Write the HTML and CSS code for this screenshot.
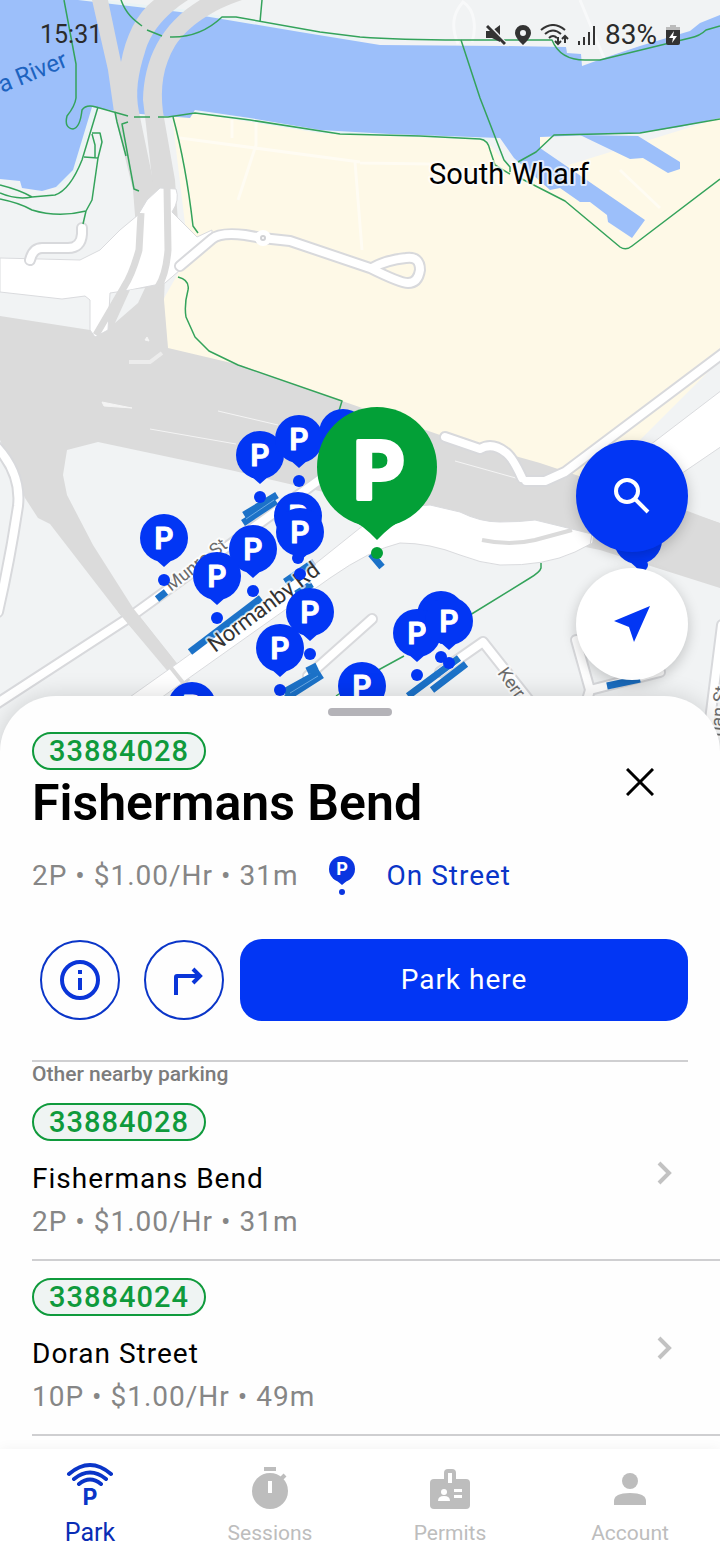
FILE: index.html
```html
<!DOCTYPE html>
<html lang="en">
<head>
    <meta charset="UTF-8">
    <meta name="viewport" content="width=device-width, initial-scale=1.0">
    <title>Park</title>
    <link rel="stylesheet" href="styles.css">
</head>
<body>
    <section class="map">
        <svg class="map-canvas" viewBox="0 0 720 760" preserveAspectRatio="xMidYMin slice">
            <defs>
                <g id="pin">
                    <circle r="24"/>
                    <path d="M-9 21L0 29L9 21Z"/>
                    <circle cy="42" r="6"/>
                </g>
            </defs>

            <!-- parkland -->
            <path class="park" d="M172 116L195 110L250 118L320 131L390 135L485 139L520 180L720 118V360L600 480L540 470L345 410L168 352L163 300L180 270L186 232Z"/>

            <!-- river and docks -->
            <path class="shore" d="M94 107L73 170L56 187M195 110L320 130L390 133L490 137M78 0L180 12L360 42"/>
            <path class="water" d="M0 0H78L180 12L300 32L380 45L500 46L566 47L567 53L581 54L582 66L607 57L640 46L690 31L700 23L720 15V118L680 127L640 133L540 137V148L645 220L632 238L608 222L607 215L590 202L580 202L560 188L550 190L514 158L500 138L390 134L320 130L250 118L195 110L190 118L128 113L92 107L73 170L56 187L42 191L22 188L20 181L0 179Z"/>
            <path class="park" d="M540 137H554L540 148Z"/>
            <path class="water" d="M580 135L638 136L680 162V169L668 173L643 158L630 159Z"/>
            <path class="faint" d="M458 44C448 20 458 8 463 2C476 10 476 30 472 42M580 0L604 58M232 120V138M256 122V145L238 200M180 138L360 162M355 162L362 250M360 163L430 164M620 170L660 208"/>

            <!-- motorway -->
            <path class="motorway" d="M92 0H108L121 62C126 36 136 14 154 0H188C163 16 150 34 145 52C138 74 135 92 139 112L155 190L158 240H137L133 190L114 112L108 70Z"/>
            <path class="motorway" d="M200 0H242C212 10 188 26 175 46C163 66 160 88 163 112L175 180L180 250H160L146 125L143 100C144 60 160 24 200 0Z"/>
            <path class="motorway" d="M0 316L90 330L125 290L165 275L164 300L168 348L240 365L345 402L440 435L540 463L720 523V588L600 550L345 497L230 470L98 442L67 450L63 475L67 495L93 545L133 608L190 680L182 686L118 612L50 524L38 518L25 498L0 440Z"/>
            <path class="motorway-line" d="M102 402L132 408L104 406ZM150 429L236 444M218 411L278 425M455 461L530 482M145 340L149 341L147 337Z"/>
            <path class="ramp" d="M129 362H150L162 353"/>

            <!-- interchange -->
            <path class="street-area" d="M0 258L80 260L100 250L120 230L138 215L147 200L160 188L176 189Q180 200 172 212L197 237L212 230V245L180 270L165 283L130 290L110 293L108 330L95 337L90 330V300L85 296L62 299L0 292Z"/>
            <path class="ground" d="M130 290L145 288L138 303L115 323Z"/>
            <path class="underpass" d="M141 213L139 250Q132 275 124 287L96 335M167 187L168 250Q166 275 158 287"/>

            <!-- streets: casing first, then fill -->
            <g class="street casing">
                <path d="M30 260Q33 248 42 248H68Q81 248 82 234V228"/>
                <path d="M180 266L212 239Q220 232 245 235L262 238L290 241L370 268Q400 283 408 283Q418 283 420 270Q420 256 406 258Q386 260 372 268"/>
                <path d="M-10 440Q22 470 18 506Q10 560 -2 612"/>
                <path d="M-10 708L130 617L322 478"/>
                <path d="M445 437L480 449Q492 442 505 452Q512 456 522 478M526 481H545L565 472L730 348"/>
                <path d="M372 619L308 676"/>
                <path d="M440 672L483 642L532 704"/>
                <path d="M576 640L590 690L660 672M590 690L584 710"/>
                <path d="M722 625L710 720"/>
            </g>
            <g class="street">
                <path d="M30 260Q33 248 42 248H68Q81 248 82 234V228"/>
                <path d="M180 266L212 239Q220 232 245 235L262 238L290 241L370 268Q400 283 408 283Q418 283 420 270Q420 256 406 258Q386 260 372 268"/>
                <path d="M-10 440Q22 470 18 506Q10 560 -2 612"/>
                <path d="M-10 708L130 617L322 478"/>
                <path d="M445 437L480 449Q492 442 505 452Q512 456 522 478M526 481H545L565 472L730 348"/>
                <path d="M372 619L308 676"/>
                <path d="M440 672L483 642L532 704"/>
                <path d="M576 640L590 690L660 672M590 690L584 710"/>
                <path d="M722 625L710 720"/>
            </g>
            <circle class="roundabout" cx="263" cy="238" r="8"/>
            <circle class="island" cx="263" cy="238" r="2"/>
            <path class="motorway" d="M118 612L133 608L190 680L180 686Z"/>

            <!-- Normanby Rd and the wide road on the right -->
            <path class="street-area" d="M120 704L175 665L310 568L360 528L390 508L430 505L460 512Q480 522 500 522Q520 522 535 520L580 531L604 537L575 552Q545 566 500 565Q480 563 460 555Q430 543 400 543Q370 550 330 578L158 700Z"/>
            <path class="underpass-thin" d="M482 540Q510 546 535 540L572 530"/>
            <path class="street-area" d="M722 390L650 445L600 490L590 545L650 495L722 446Z"/>
            <path class="motorway" d="M600 478L722 524V588L592 545Z"/>
            <path class="underpass-thin" d="M168 664L184 684"/>

            <!-- walking and bike paths -->
            <path class="path" d="M64 0L76 64L76 98Q75 106 67 116Q64 128 73 129Q80 128 82 110Q86 104 96 107L128 116M134 117H150M158 117H168L195 113L250 120L340 134L420 136L480 139Q488 140 490 150L495 165L510 174"/>
            <path class="path" d="M121 0C126 14 134 20 142 26M147 30L162 36M170 37Q200 38 222 17L236 17L320 32L360 37Q400 40 460 40H552Q560 60 585 60H600L690 38Q700 36 706 30L720 26M262 0L260 22"/>
            <path class="path" d="M461 40L480 98L504 160L510 167V172M518 162L536 152L554 135L640 133L720 119M520 178L565 201L620 247Q626 251 632 246L720 179"/>
            <path class="path" d="M98 107L82 160Q70 190 55 195L32 197Q20 190 0 185M0 193Q16 200 32 197M0 199Q20 203 32 210Q58 218 86 211L92 200L98 158L84 157M92 133H100L102 142L98 158M95 158V145L92 134M86 211L83 224M115 112L117 122L126 156M128 122L122 124L134 189L139 191M173 117Q186 165 193 226L198 233"/>
            <path class="path" d="M178 277Q190 280 188 290Q184 305 186 317L195 337L209 351L238 365L342 401L338 414M541 563V568Q540 572 530 578L470 615M404 656L360 680L336 696"/>

            <!-- parking bays -->
            <g class="bay">
                <path d="M157 599L166 592"/>
                <path d="M244 515L277 495M243 523L276 501"/>
                <path d="M190 652L261 598"/>
                <path d="M285 582L314 562M296 594L312 584"/>
                <path d="M284 692L320 672M286 698L322 675M307 671L317 666"/>
                <path d="M408 696L459 658M432 690L466 664"/>
                <path d="M371 554L382 567"/>
                <path d="M607 686L640 679"/>
            </g>
            <path class="bay-gap" d="M246 519L274 500M290 693L318 676"/>

            <!-- labels -->
            <text class="label river" transform="translate(2 93) rotate(-22)">a River</text>
            <text class="label place" x="509" y="184">South Wharf</text>
            <text class="label road" transform="translate(171 592) rotate(-38)">Munro St</text>
            <text class="label main-road" transform="translate(215 653) rotate(-37)">Normanby Rd</text>
            <text class="label road" transform="translate(497 673) rotate(54)">Kerr</text>
            <text class="label road" transform="translate(722 737) rotate(-84)">uan St</text>

            <!-- pins -->
            <g class="pin" transform="translate(343 433)"><use href="#pin"/></g>
            <g class="pin" transform="translate(260 455)"><use href="#pin"/><text y="11">P</text></g>
            <g class="pin" transform="translate(299 439)"><use href="#pin"/><text y="11">P</text></g>
            <g class="pin" transform="translate(164 538)"><use href="#pin"/><text y="11">P</text></g>
            <g class="pin" transform="translate(253 549)"><use href="#pin"/><text y="11">P</text></g>
            <g class="pin" transform="translate(217 576)"><use href="#pin"/><text y="11">P</text></g>
            <g class="pin" transform="translate(298 516)"><use href="#pin"/><text y="11">P</text></g>
            <g class="pin" transform="translate(300 532)"><use href="#pin"/><text y="11">P</text></g>
            <g class="pin" transform="translate(310 612)"><use href="#pin"/><text y="11">P</text></g>
            <g class="pin" transform="translate(280 648)"><use href="#pin"/><text y="11">P</text></g>
            <g class="pin" transform="translate(192 706)"><use href="#pin"/><text y="11">P</text></g>
            <g class="pin" transform="translate(362 686)"><use href="#pin"/><text y="11">P</text></g>
            <g class="pin" transform="translate(441 615)"><use href="#pin"/></g>
            <g class="pin" transform="translate(417 633)"><use href="#pin"/><text y="11">P</text></g>
            <g class="pin" transform="translate(449 621)"><use href="#pin"/><text y="11">P</text></g>
            <g class="pin" transform="translate(638 540)"><use href="#pin"/></g>
            <g class="pin" transform="translate(642 523)"><use href="#pin"/></g>

            <g class="pin selected" transform="translate(377 467)">
                <circle r="60"/>
                <path d="M-30 50Q-14 58 0 73Q14 58 30 50Z"/>
                <circle cy="86" r="6"/>
                <text x="2" y="32">P</text>
            </g>
        </svg>

        <header class="status-bar">
            <span>15:31</span>
            <div class="status-icons">
                <svg width="20" height="22" viewBox="0 0 20 22"><path d="M0 7H6L14 1V18L6 14H0Z" fill="#333"/><path d="M3 1L20 19" stroke="#f1f3f4" stroke-width="2"/><path d="M1 2L19 20" stroke="#333" stroke-width="3"/></svg>
                <svg width="16" height="20" viewBox="0 0 16 20"><path fill="#333" fill-rule="evenodd" d="M8 0A8 8 0 0 0 0 8C0 13 8 20 8 20S16 13 16 8A8 8 0 0 0 8 0ZM8 5A3 3 0 1 1 8 11A3 3 0 0 1 8 5Z"/></svg>
                <svg width="29" height="22" viewBox="0 0 29 22" fill="none" stroke="#333" stroke-width="2"><path d="M1 6Q13 -4 25 6M5 10Q13 3 21 10M9 14Q13 10 17 14"/><path d="M18 13V20M15 17L18 20L21 17M25 19V12M22 15L25 12L28 15"/></svg>
                <svg width="18" height="20" viewBox="0 0 18 20" stroke="#333" stroke-width="2"><path d="M1 16V20M6 12V20M11 7V20M16 1V20"/></svg>
                <span class="battery">83%</span>
                <svg width="14" height="20" viewBox="0 0 14 20"><path d="M4 0H10V2H14V5H0V2H4Z" fill="#bbb"/><path d="M0 5H14V18Q14 20 12 20H2Q0 20 0 18Z" fill="#333"/><path d="M8 6L3 13H7L6 18L11 11H7Z" fill="#fff"/></svg>
            </div>
        </header>

        <div class="map-buttons">
            <button class="round-button search" aria-label="Search">
                <svg width="36" height="36" viewBox="0 0 36 36" fill="none" stroke="#fff" stroke-width="4"><circle cx="13" cy="13" r="11"/><path d="M21 21L34 34"/></svg>
            </button>
            <button class="round-button locate" aria-label="My location">
                <svg width="36" height="36" viewBox="0 0 36 36"><path d="M36 0L20 36L15 21L0 15Z" fill="#0236f4"/></svg>
            </button>
        </div>
    </section>

    <main class="sheet">
        <div class="handle"></div>

        <div class="sheet-header">
            <div>
                <span class="zone">33884028</span>
                <h1>Fishermans Bend</h1>
            </div>
            <button class="close" aria-label="Close">
                <svg width="28" height="28" viewBox="0 0 28 28" stroke="#000" stroke-width="3"><path d="M1 1L27 27M27 1L1 27"/></svg>
            </button>
        </div>

        <div class="info">
            <span class="meta">2P • $1.00/Hr • 31m</span>
            <svg class="small-pin" width="26" height="40" viewBox="-13 -13 26 40"><circle r="13"/><path d="M-6 11L0 16L6 11Z"/><circle cy="23" r="3"/><text y="6">P</text></svg>
            <span class="on-street">On Street</span>
        </div>

        <div class="actions">
            <button class="outline-button" aria-label="Information">
                <svg width="40" height="40" viewBox="0 0 40 40" fill="none" stroke="#0a35d8" stroke-width="4"><circle cx="20" cy="20" r="18"/><path d="M20 18V30M20 10V14"/></svg>
            </button>
            <button class="outline-button" aria-label="Directions">
                <svg width="40" height="40" viewBox="0 0 40 40" fill="none" stroke="#0a35d8" stroke-width="4"><path d="M12 35V17Q12 16 13 16H36M29 9L36 16L29 23"/></svg>
            </button>
            <button class="park-button">Park here</button>
        </div>

        <h2>Other nearby parking</h2>
        <ul class="nearby">
            <li>
                <a href="#">
                    <div>
                        <span class="zone">33884028</span>
                        <p class="name">Fishermans Bend</p>
                        <p class="meta">2P • $1.00/Hr • 31m</p>
                    </div>
                    <svg class="chevron" width="15" height="24" viewBox="0 0 15 24"><path d="M2 2L12 12L2 22"/></svg>
                </a>
            </li>
            <li>
                <a href="#">
                    <div>
                        <span class="zone">33884024</span>
                        <p class="name">Doran Street</p>
                        <p class="meta">10P • $1.00/Hr • 49m</p>
                    </div>
                    <svg class="chevron" width="15" height="24" viewBox="0 0 15 24"><path d="M2 2L12 12L2 22"/></svg>
                </a>
            </li>
        </ul>
    </main>

    <nav class="tabs">
        <a href="#" class="active">
            <svg width="48" height="48" viewBox="0 0 48 48"><path d="M3 13Q24 -5 45 13M8 18Q24 5 40 18M13 23Q24 14 35 23" fill="none" stroke="#0a35c8" stroke-width="4" stroke-linecap="round"/><text x="24" y="44">P</text></svg>
            Park
        </a>
        <a href="#">
            <svg width="48" height="48" viewBox="0 0 48 48" fill="#bdbdbd"><path d="M18 6H30V10H18Z"/><path d="M35 18L39 14" stroke="#bdbdbd" stroke-width="4"/><circle cx="24" cy="30" r="18"/><path d="M22 20H26V32H22Z" fill="#fff"/></svg>
            Sessions
        </a>
        <a href="#">
            <svg width="48" height="48" viewBox="0 0 48 48" fill="#bdbdbd"><rect x="4" y="18" width="40" height="30" rx="4"/><rect x="18" y="8" width="12" height="16" rx="4"/><g fill="#fff"><path d="M22 12H26V22H22Z"/><circle cx="18" cy="31" r="3"/><path d="M12 40Q12 35 18 35Q24 35 24 40ZM28 28H36V31H28ZM28 34H36V37H28Z"/></g></svg>
            Permits
        </a>
        <a href="#">
            <svg width="48" height="48" viewBox="0 0 48 48" fill="#bdbdbd"><circle cx="24" cy="20" r="8"/><path d="M8 44V40Q8 32 24 32Q40 32 40 40V44Z"/></svg>
            Account
        </a>
    </nav>
</body>
</html>
```
FILE: styles.css
```css
* {
    box-sizing: border-box;
}
body {
    margin: 0;
    min-height: 100vh;
    display: flex;
    flex-direction: column;
    font-family: Roboto, "Liberation Sans", sans-serif;
    font-size: 28px;
    line-height: 32px;
    background-color: #fff;
    color: #000;
}
button {
    padding: 0;
    border: none;
    background: none;
    font: inherit;
    cursor: pointer;
}
a {
    color: inherit;
    text-decoration: none;
}
svg {
    display: block;
    flex-shrink: 0;
}

/* Map */
.map {
    position: relative;
    height: 760px;
    overflow: hidden;
    background-color: #f1f3f4;
}
.map-canvas {
    position: absolute;
    top: 0;
    left: 0;
    width: 100%;
    height: 100%;
}
.park {
    fill: #fef9e7;
}
.water {
    fill: #9cbffa;
}
.shore {
    fill: none;
    stroke: #e9f3f5;
    stroke-width: 6;
}
.ground {
    fill: #f1f3f4;
}
.faint {
    fill: none;
    stroke: #fff;
    stroke-opacity: 0.5;
    stroke-width: 3;
}
.motorway {
    fill: #dbdbdb;
}
.motorway-line {
    fill: #f4f4f4;
    stroke: #f4f4f4;
    stroke-width: 1;
}
.ramp {
    fill: none;
    stroke: #ececec;
    stroke-width: 4;
}
.street {
    fill: none;
    stroke: #fff;
    stroke-width: 8;
    stroke-linecap: round;
    stroke-linejoin: round;
}
.casing {
    stroke: #d8d9dc;
    stroke-width: 12;
}
.street-area {
    fill: #fff;
    stroke: #dadbde;
    stroke-width: 1;
}
.underpass {
    fill: none;
    stroke: #dbdbdb;
    stroke-width: 7;
}
.underpass-thin {
    fill: none;
    stroke: #dbdbdb;
    stroke-width: 4;
}
.roundabout {
    fill: #fff;
}
.island {
    fill: none;
    stroke: #d0d1d4;
    stroke-width: 2;
}
.path {
    fill: none;
    stroke: #34a35b;
    stroke-width: 1.5;
    stroke-linejoin: round;
}
.bay {
    fill: none;
    stroke: #1c72c8;
    stroke-width: 7;
}
.bay-gap {
    fill: none;
    stroke: #6aa9e4;
    stroke-width: 1;
}
.label {
    paint-order: stroke;
    stroke: #fff;
    stroke-width: 4;
    stroke-linejoin: round;
    stroke-opacity: 0.7;
}
.river {
    font-size: 24px;
    fill: #1d63c0;
    stroke: none;
}
.place {
    font-size: 29px;
    text-anchor: middle;
}
.road {
    font-size: 18px;
    fill: #6b6b6b;
}
.main-road {
    font-size: 22px;
    fill: #333;
}
.pin {
    fill: #0236f4;
}
.pin text {
    font-family: Inter, "Liberation Sans", sans-serif;
    font-size: 30px;
    font-weight: 600;
    text-anchor: middle;
    fill: #fff;
    stroke: #fff;
    stroke-width: 1;
    stroke-linejoin: round;
}
.selected {
    fill: #03a037;
}
.selected text {
    font-size: 80px;
    font-weight: 700;
    stroke-width: 4;
}

.status-bar {
    position: relative;
    display: flex;
    justify-content: space-between;
    align-items: center;
    padding: 19px 40px;
    font-size: 25px;
    color: #2b2b2b;
}
.status-icons {
    display: flex;
    align-items: center;
    gap: 9px;
}
.battery {
    font-size: 28px;
}

.map-buttons {
    position: absolute;
    right: 32px;
    bottom: 80px;
    display: flex;
    flex-direction: column;
    gap: 16px;
}
.round-button {
    display: flex;
    align-items: center;
    justify-content: center;
    width: 112px;
    height: 112px;
    border-radius: 50%;
    box-shadow: 0 4px 14px rgba(0, 0, 0, 0.2);
}
.search {
    background-color: #0236f4;
}
.locate {
    background-color: #fff;
}

/* Bottom sheet */
.sheet {
    position: relative;
    flex: 1;
    margin-top: -64px;
    padding: 12px 32px;
    border-radius: 56px 56px 0 0;
    background-color: #fefefe;
    box-shadow: 0 0 24px rgba(0, 0, 0, 0.15);
}
.handle {
    width: 64px;
    height: 8px;
    margin: 0 auto 16px;
    border-radius: 4px;
    background-color: #b4b3b8;
}
.sheet-header {
    display: flex;
    align-items: center;
    justify-content: space-between;
    padding-right: 24px;
}
.zone {
    display: block;
    width: fit-content;
    padding: 1px 15px;
    border: 2px solid #0f9a3c;
    border-radius: 19px;
    background-color: #eff4f3;
    color: #0f9a3c;
    font-size: 29px;
    font-weight: 500;
    letter-spacing: 1px;
}
h1 {
    margin: 5px 0 0;
    font-size: 50px;
    font-weight: 600;
    line-height: 56px;
}
.close {
    display: flex;
    align-items: center;
    justify-content: center;
    width: 48px;
    height: 48px;
}
.info {
    display: flex;
    align-items: center;
    gap: 31px;
    margin-top: 25px;
}
.meta {
    color: #868686;
    letter-spacing: 1px;
}
.small-pin {
    fill: #0a35e0;
}
.small-pin text {
    font-family: Inter, "Liberation Sans", sans-serif;
    font-size: 18px;
    font-weight: 700;
    text-anchor: middle;
    fill: #fff;
}
.on-street {
    color: #0a35c8;
    letter-spacing: 1px;
}
.actions {
    display: flex;
    align-items: center;
    gap: 16px;
    margin: 43px 0 39px;
}
.outline-button {
    display: flex;
    align-items: center;
    justify-content: center;
    width: 80px;
    height: 80px;
    margin-left: 8px;
    border: 2px solid #0a35c8;
    border-radius: 50%;
}
.park-button {
    flex: 1;
    height: 82px;
    border-radius: 22px;
    background-color: #0236f4;
    color: #fff;
    letter-spacing: 1px;
}
h2 {
    margin: 0;
    border-top: 2px solid #cfcfd1;
    font-size: 21px;
    font-weight: 500;
    line-height: 24px;
    color: #7c7c7c;
}
.nearby {
    margin: 0 -32px 0 0;
    padding: 0;
    list-style: none;
}
.nearby a {
    display: flex;
    align-items: center;
    justify-content: space-between;
    padding: 17px 48px 21px 0;
    border-bottom: 2px solid #cfcfd1;
}
.name {
    margin: 22px 0 11px;
    letter-spacing: 1px;
}
.nearby .meta {
    margin: 0;
}
.chevron {
    margin-top: 4px;
    fill: none;
    stroke: #c2c2c2;
    stroke-width: 4;
}

/* Tabs */
.tabs {
    position: relative;
    display: flex;
    height: 112px;
    padding-top: 12px;
    background-color: #fff;
    box-shadow: 0 0 12px rgba(0, 0, 0, 0.05);
}
.tabs a {
    flex: 1;
    display: flex;
    flex-direction: column;
    align-items: center;
    gap: 8px;
    font-size: 21px;
    color: #bdbdbd;
}
.tabs .active {
    font-size: 25px;
    color: #0a2db5;
}
.tabs text {
    font-family: Inter, "Liberation Sans", sans-serif;
    font-size: 23px;
    font-weight: 700;
    text-anchor: middle;
    fill: #0a35c8;
}
```
